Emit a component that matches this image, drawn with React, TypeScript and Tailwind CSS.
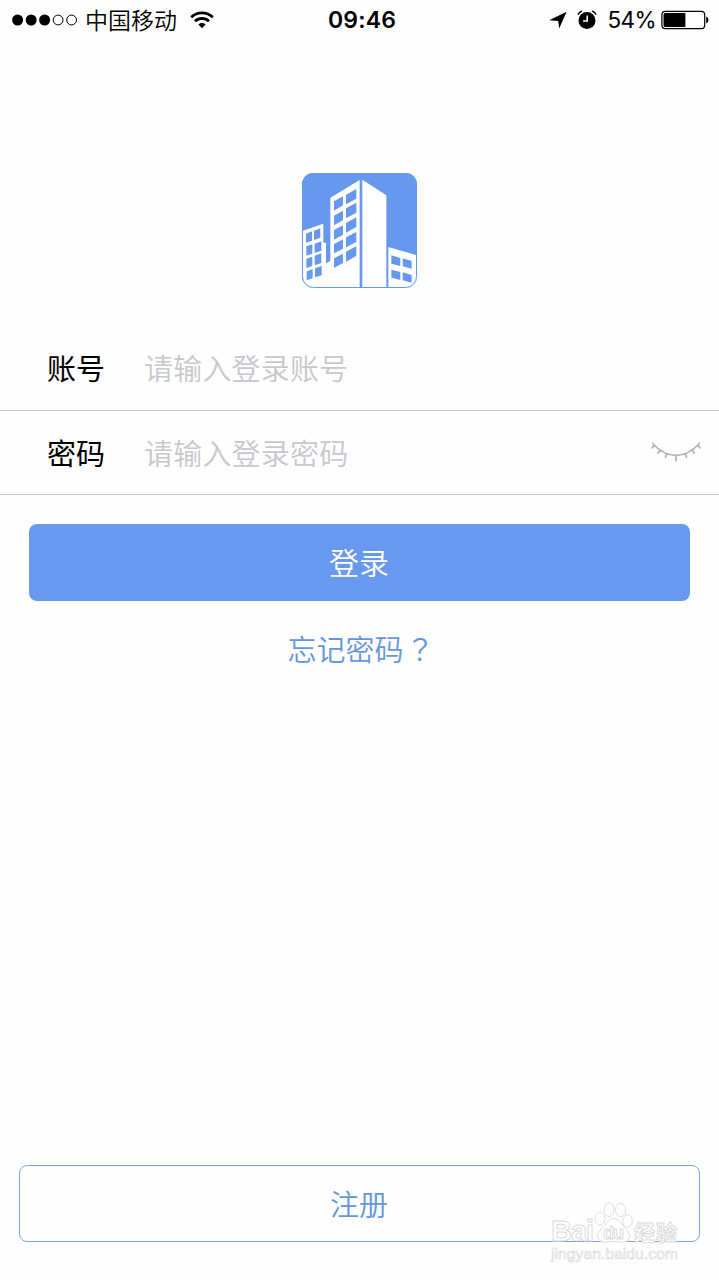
import { useState } from "react";

const fields = [
  { name: "account", label: "账号", placeholder: "请输入登录账号", type: "text" },
  { name: "password", label: "密码", placeholder: "请输入登录密码", type: "password" }
];

function StatusBar() {
  return (
    <header className="grid h-10 grid-cols-[1fr_auto_1fr] items-center pl-3 pr-2.5 text-black">
      <div className="flex items-center">
        <svg width="66" height="12" viewBox="0 0 66 12">
          <circle cx="5.6" cy="6" r="5.5" />
          <circle cx="19.2" cy="6" r="5.5" />
          <circle cx="32.6" cy="6" r="5.5" />
          <circle cx="46.1" cy="6" r="4.9" fill="none" stroke="currentColor" />
          <circle cx="59.6" cy="6" r="4.9" fill="none" stroke="currentColor" />
        </svg>
        <span className="ml-[7px] h-10 text-[23px] font-[350] leading-[38px]">中国移动</span>
        <svg className="ml-[13px]" width="24" height="18" viewBox="0 0 24 18" fill="none" stroke="currentColor" strokeWidth="2.7">
          <path d="M1.2 6.3a15.2 15.2 0 0 1 21.6 0" />
          <path d="M5 10.3a9.9 9.9 0 0 1 14 0" />
          <path d="M8.4 13.5a5.1 5.1 0 0 1 7.2 0L12 17.2z" fill="currentColor" stroke="none" />
        </svg>
      </div>
      <span className="pl-[3px] font-['Inter','Liberation_Sans',sans-serif] text-[23px] font-semibold leading-10 tracking-[0.2px]">09:46</span>
      <div className="flex items-center justify-end">
        <svg width="18" height="18" viewBox="0 0 18 18">
          <path d="M17.6.8 10.2 17.6 9.2 10 .2 9.2z" />
        </svg>
        <svg className="ml-[10px]" width="20" height="20" viewBox="0 0 20 20">
          <circle cx="10" cy="10.6" r="8.5" />
          <path d="M.9 4.6A9 9 0 0 1 4.8 1M15.2 1a9 9 0 0 1 3.9 3.6" fill="none" stroke="currentColor" strokeWidth="1.5" />
          <path d="M10.2 5.4v5.5H6.1" fill="none" stroke="#fff" strokeWidth="1.5" />
        </svg>
        <span className="ml-[10px] font-['Inter','Liberation_Sans',sans-serif] text-[22.5px] leading-10 tracking-[-0.6px]">54%</span>
        <svg className="ml-[5px]" width="48" height="20" viewBox="0 0 48 20">
          <rect x=".9" y="1.4" width="42.8" height="17.2" rx="3.4" fill="none" stroke="currentColor" strokeWidth="1.2" />
          <path d="M4.2 3h20.2v14H4.2a1.7 1.7 0 0 1-1.7-1.7V4.7A1.7 1.7 0 0 1 4.2 3z" />
          <path d="M45.2 6.6q2.3 1 2.3 3.4t-2.3 3.4z" />
        </svg>
      </div>
    </header>
  );
}

function Logo() {
  return (
    <svg width="115" height="115" viewBox="21 24 345 345">
      <defs>
        <clipPath id="logo-shape">
          <rect x="21" y="24" width="345" height="345" rx="34" />
        </clipPath>
      </defs>
      <g clipPath="url(#logo-shape)">
        <rect x="21" y="24" width="345" height="345" fill="#6699ed" />
        <g fill="#fff">
          <path d="M24 197 85 176v57h8v62l13-7V98l88-53v324H24z" />
          <path d="m202 44 72 47v278h-72z" />
          <path d="m280 246 86 25v98h-86z" />
        </g>
        <g fill="#6699ed">
          <path d="m117 109 27-15v27l-27 16zM153 89l31-17v29l-31 17z" />
          <path d="m117 152 27-15v29l-27 15zM153 130l31-17v30l-31 17z" />
          <path d="m117 195 27-14v28l-27 15zM153 174l31-17v29l-31 17z" />
          <path d="m117 237 27-14v28l-27 14zM153 217l31-16v30l-31 16z" />
          <path d="m117 280 27-14v28l-27 15zM153 260l31-16v29l-31 17z" />
          <path d="m33 206 18-7v28l-18 6zM57 197l19-7v28l-19 7z" />
          <path d="m34 244 18-6v28l-18 6zM59 236l20-7v28l-20 7z" />
          <path d="m34 281 18-6v28l-18 6zM59 272l20-7v29l-20 7z" />
          <path d="m35 319 18-6v27l-18 6zM60 310l20-7v28l-20 6z" />
          <path d="m289 271 27 8v24l-27-7zM323 280l27 8v23l-27-7z" />
          <path d="m289 314 27 7v24l-27-7zM323 322l27 8v23l-27-7z" />
        </g>
      </g>
      <rect x="22.5" y="25.5" width="342" height="342" rx="33" fill="none" stroke="#6699ed" strokeWidth="3" />
    </svg>
  );
}

function ClosedEye() {
  return (
    <svg width="50" height="20" viewBox="0 0 50 20" fill="none" stroke="#b5b5b5" strokeWidth="1.8">
      <path d="M1 1q24 25 48 0M3.4 3 .8 6.4M9.2 7.8l-2.6 4M16 11.6l-1.8 4.6M25 13v6.2M34 11.6l1.8 4.6M41 7.8l2.6 4M46.8 3l2.6 3.4" />
    </svg>
  );
}

function Watermark() {
  return (
    <svg className="absolute bottom-[14px] right-[36px]" width="136" height="68" viewBox="0 0 136 68" fill="#fff" stroke="#d9d9d9" strokeWidth=".9">
      <text x="4" y="43" fontFamily="Liberation Sans, sans-serif" fontSize="29" fontWeight="700" textLength="43">Bai</text>
      <ellipse cx="53" cy="20.5" rx="4.8" ry="6.5" />
      <ellipse cx="62" cy="11.5" rx="4.8" ry="7" />
      <ellipse cx="73.5" cy="12" rx="5" ry="6.7" />
      <ellipse cx="80.5" cy="23" rx="4.8" ry="6.3" />
      <path d="M66.5 20.5c-6 0-7 6-11 9.500-4 3-5.500 6-4.500 9.500 1 4 4.500 5 8 4.500 5-.8 10-.8 15 0 4 .5 8-1 8.500-5 .5-4-2-6.500-5-9.500-4-4-5-9-11-9z" />
      <text x="56" y="41" fontFamily="Liberation Sans, sans-serif" fontSize="18" fontWeight="700" textLength="21">du</text>
      <text x="87" y="42" fontFamily="Noto Sans CJK SC, sans-serif" fontSize="21" fontWeight="700" textLength="43">经验</text>
      <text x="4" y="61" fontFamily="Liberation Sans, sans-serif" fontSize="14.5" strokeWidth=".6" textLength="127" lengthAdjust="spacingAndGlyphs">jingyan.baidu.com</text>
    </svg>
  );
}

export default function App() {
  const [showPassword, setShowPassword] = useState(false);

  return (
    <div className="relative flex h-[1280px] w-full flex-col bg-[#fefefe] font-['Noto_Sans_CJK_SC',sans-serif]">
      <StatusBar />
      <main className="flex flex-1 flex-col">
        <div className="flex justify-center pb-[38px] pt-[133px]">
          <Logo />
        </div>

        <form className="flex flex-col">
          {fields.map((field) => (
            <div key={field.name} className="flex h-[84.5px] items-center border-b border-[#c8c8cc] pl-[47px] pr-[18px] text-[29px]">
              <label htmlFor={field.name} className="w-[97px] shrink-0 text-black">{field.label}</label>
              <input
                id={field.name}
                type={showPassword ? "text" : field.type}
                placeholder={field.placeholder}
                className="min-w-0 flex-1 font-[350] outline-none placeholder:tracking-[0.2px] placeholder:text-[#c7c7cd]"
              />
              {field.type === "password" && (
                <button type="button" onClick={() => setShowPassword(!showPassword)}>
                  <ClosedEye />
                </button>
              )}
            </div>
          ))}
          <button type="button" className="mx-[29px] mt-[29px] h-[77px] rounded-lg bg-[#6999ee] pb-[3px] pr-px text-[30px] font-[350] text-white">
            登录
          </button>
        </form>

        <a className="mt-[26px] self-center pl-[3px] text-[29px] font-[350] text-[#6496dc]" href="#forgot">
          忘记密码<span className="ml-[2px] font-['Noto_Sans_CJK_TC',sans-serif]">？</span>
        </a>
      </main>

      <button type="button" className="mx-[19px] mb-[38px] h-[77px] rounded-lg border border-[#7ba3dd] pr-px text-[29px] font-[350] text-[#6496dc]">
        注册
      </button>
      <Watermark />
    </div>
  );
}
